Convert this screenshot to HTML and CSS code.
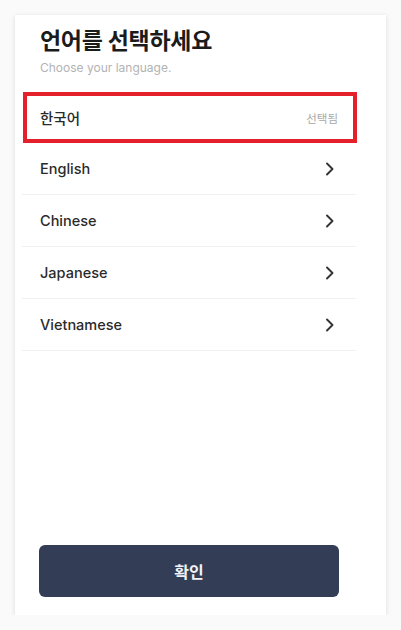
FILE: index.html
```html
<!DOCTYPE html>
<html lang="ko">
<head>
<meta charset="utf-8">
<title>언어 선택</title>
<link rel="stylesheet" href="styles.css">
</head>
<body>
<main class="card">
  <header class="head">
    <h1 class="title">언어를 선택하세요</h1>
    <p class="subtitle">Choose your language.</p>
  </header>
  <ul class="list">
    <li class="row row-selected">
      <span class="label">한국어</span>
      <span class="state">선택됨</span>
    </li>
    <li class="row">
      <span class="label">English</span>
      <svg class="chev" viewBox="0 0 10 14" width="10" height="14"><path d="M2 1.5 L7.5 7 L2 12.5" fill="none" stroke="#333" stroke-width="1.9" stroke-linecap="round" stroke-linejoin="round"/></svg>
    </li>
    <li class="row">
      <span class="label">Chinese</span>
      <svg class="chev" viewBox="0 0 10 14" width="10" height="14"><path d="M2 1.5 L7.5 7 L2 12.5" fill="none" stroke="#333" stroke-width="1.9" stroke-linecap="round" stroke-linejoin="round"/></svg>
    </li>
    <li class="row">
      <span class="label">Japanese</span>
      <svg class="chev" viewBox="0 0 10 14" width="10" height="14"><path d="M2 1.5 L7.5 7 L2 12.5" fill="none" stroke="#333" stroke-width="1.9" stroke-linecap="round" stroke-linejoin="round"/></svg>
    </li>
    <li class="row">
      <span class="label">Vietnamese</span>
      <svg class="chev" viewBox="0 0 10 14" width="10" height="14"><path d="M2 1.5 L7.5 7 L2 12.5" fill="none" stroke="#333" stroke-width="1.9" stroke-linecap="round" stroke-linejoin="round"/></svg>
    </li>
  </ul>
  <button class="confirm" type="button">확인</button>
</main>
</body>
</html>
```

FILE: styles.css
```css
html, body {
  margin: 0;
  padding: 0;
  background: #fafafa;
}
body {
  font-family: Inter, "Noto Sans CJK KR", "Noto Sans", sans-serif;
  color: #222;
}
.card {
  box-sizing: border-box;
  margin: 15px 0 0 15px;
  width: 371px;
  height: 600px;
  background: #fff;
  box-shadow: 0 1px 5px rgba(0, 0, 0, 0.12);
  display: flex;
  flex-direction: column;
  padding: 0 30px 18px 7px;
}
.head {
  padding: 11px 0 0 18px;
}
.title {
  margin: 0;
  font-size: 23px;
  line-height: 30px;
  font-weight: 700;
  color: #1b1b1b;
  letter-spacing: -0.3px;
}
.subtitle {
  margin: 4px 0 0;
  font-size: 12px;
  line-height: 16px;
  color: #b3b3b3;
  font-weight: 400;
}
.list {
  list-style: none;
  margin: 16px 0 0;
  padding: 0;
}
.row {
  box-sizing: border-box;
  height: 52px;
  display: flex;
  align-items: center;
  justify-content: space-between;
  padding: 0 21px 0 18px;
  border-bottom: 1px solid #f0f0f0;
}
.row-selected {
  height: 51px;
  border: 4px solid #e4202a;
  margin-left: 1px;
  margin-right: -1px;
  padding: 0 15px 0 13px;
}
.label {
  font-size: 14.5px;
  font-weight: 500;
  color: #2a2a2a;
}
.state {
  font-size: 11.5px;
  color: #a8a8a8;
}
.chev {
  display: block;
}
.confirm {
  margin-top: auto;
  margin-left: 17px;
  width: 300px;
  height: 52px;
  border: none;
  border-radius: 6px;
  background: #333d56;
  color: #f2f3f6;
  font-family: Inter, "Noto Sans CJK KR", sans-serif;
  font-size: 16px;
  font-weight: 700;
}
```
